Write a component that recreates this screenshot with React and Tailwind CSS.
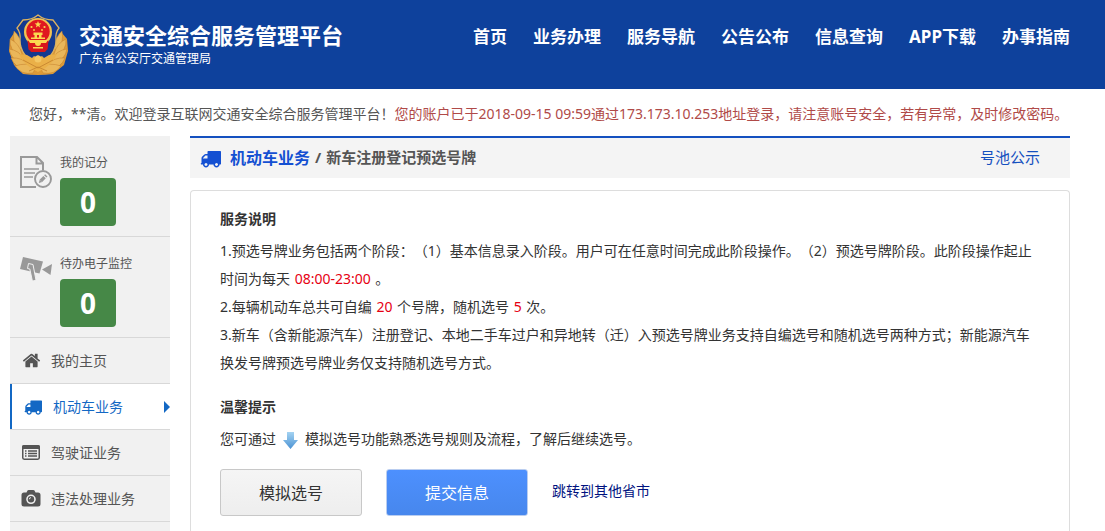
import React from 'react'

const navLinks = ['首页', '业务办理', '服务导航', '公告公布', '信息查询', 'APP下载', '办事指南']

const menuItems = [
    { label: '我的主页', icon: HomeIcon },
    { label: '机动车业务', icon: TruckIcon, active: true },
    { label: '驾驶证业务', icon: ListIcon },
    { label: '违法处理业务', icon: CameraIcon },
]

function HomeIcon() {
    return (
        <svg className="w-[19px] h-[19px]" viewBox="0 0 1792 1792" fill="currentColor" aria-hidden="true">
            <path d="M1472 992v480q0 26-19 45t-45 19h-384v-384h-256v384h-384q-26 0-45-19t-19-45v-480q0-1 .5-3t.5-3l575-474 575 474q1 2 1 6zm223-69l-62 74q-8 9-21 11h-3q-13 0-21-7l-692-577-692 577q-12 8-24 7-13-2-21-11l-62-74q-8-10-7-23.5t11-21.5l719-599q32-26 76-26t76 26l244 204v-195q0-14 9-23t23-9h192q14 0 23 9t9 23v408l219 182q10 8 11 21.5t-7 23.5z" />
        </svg>
    )
}

function TruckIcon({ className = 'w-[18px] h-[18px]' }) {
    return (
        <svg className={className} viewBox="0 0 1792 1792" fill="currentColor" aria-hidden="true">
            <path d="M640 1408q0-52-38-90t-90-38-90 38-38 90 38 90 90 38 90-38 38-90zm-384-512h384v-256h-158q-13 0-22 9l-195 195q-9 9-9 22v30zm1280 512q0-52-38-90t-90-38-90 38-38 90 38 90 90 38 90-38 38-90zm256-1088v1024q0 15-4 26.5t-13.5 18.5-16.5 11.5-23.5 6-22.5 2-25.5 0-22.5-.5q0 106-75 181t-181 75-181-75-75-181h-384q0 106-75 181t-181 75-181-75-75-181h-64q-3 0-22.5.5t-25.5 0-22.5-2-23.5-6-16.5-11.5-13.5-18.5-4-26.5q0-26 19-45t45-19v-320q0-8-.5-35t0-38 2.5-34.5 6.5-37 14-30.5 22.5-30l198-198q19-19 50.5-32t58.5-13h160v-192q0-26 19-45t45-19h1024q26 0 45 19t19 45z" />
        </svg>
    )
}

function ListIcon() {
    return (
        <svg className="w-[18px] h-[18px]" viewBox="0 0 18 18" aria-hidden="true">
            <rect x="0.75" y="1.75" width="16.5" height="13.5" rx="1.4" fill="none" stroke="currentColor" strokeWidth="1.5" />
            <path d="M0 5V3q0-2 2-2h14q2 0 2 2v2z" fill="currentColor" />
            <path d="M3 7h1.500M6 7h9M3 9.500h1.500M6 9.500h9M3 12h1.500M6 12h9" stroke="currentColor" strokeWidth="1.300" />
        </svg>
    )
}

function CameraIcon() {
    return (
        <svg className="w-[20px] h-[18px]" viewBox="0 0 19 18" aria-hidden="true">
            <path fill="currentColor" fillRule="evenodd" d="M2.500 2.500H5l1-2Q6.400 0 7.200 0h4.600q.8 0 1.200.5l1 2h2.500Q19 2.500 19 5v9q0 2.500-2.500 2.500h-14Q0 16.500 0 14V5q0-2.500 2.500-2.500zM9.500 4.500a4.800 4.800 0 1 0 0 9.600 4.800 4.800 0 0 0 0-9.600z" />
            <circle cx="9.500" cy="9.300" r="3.200" fill="currentColor" />
            <path d="M7.800 9.300q0-1.700 1.700-1.700" fill="none" stroke="#f1f1f1" strokeWidth="0.900" />
        </svg>
    )
}

function RecordIcon() {
    return (
        <svg className="w-8 h-8 shrink-0" viewBox="0 0 32 32" fill="none" stroke="#999" aria-hidden="true">
            <path d="M16 31H1V1h16l6 6v7M16.500 1v6.500H23" strokeWidth="2" />
            <path d="M4 13h15M4 17h11M4 21h9" strokeWidth="1.700" />
            <circle cx="23" cy="23" r="8" strokeWidth="1.900" />
            <path d="M18.800 27l1-3.500 2.400 2.400z" fill="#999" stroke="none" />
            <path d="M21 24.700l3.600-3.600M25.300 20.400l1-1" strokeWidth="3.400" />
        </svg>
    )
}

function MonitorIcon() {
    return (
        <svg className="w-8 h-8 shrink-0" viewBox="0 0 32 32" aria-hidden="true">
            <path d="M3 0l20 4.500-3.500 12L0 12z" fill="#999" />
            <path d="M8.500 6.500l4.500 1 3 15.800-3.600.8L9.800 12l-2.300-.5z" fill="#999" stroke="#f1f1f1" strokeWidth="1" />
            <path d="M22 12.500L32 7l-1.500 11z" fill="#999" />
        </svg>
    )
}

// Police badge: laurel wreath, shield and the red national emblem
function PoliceBadge() {
    return (
        <svg className="w-[60px] h-[62px] shrink-0" viewBox="0 0 60 62" aria-hidden="true">
            <path d="M5 19q5 5 8 14 4 14 16 21 12-7 16-21 3-9 8-14l5 6 1 12-4 14-11 9q-15 2-30 0L5 51 0 37l1-12z" fill="#dc9a38" />
            <g fill="#eab75a" stroke="#c27f2c" strokeWidth="0.500">
                <path d="M5 17q7 6 8 17l-4 3Q3 28 5 17z" />
                <path d="M1 25q9 4 12 15l-2 3Q0 36 1 25z" />
                <path d="M0 35q10 1 16 11l-3 3Q2 46 0 35z" />
                <path d="M2 44q11-1 18 7l-3 4Q6 54 2 44z" />
                <path d="M6 52q11-4 21 1l-3 6Q12 61 6 52z" />
                <path d="M53 17q-7 6-8 17l4 3q6-9 4-20z" />
                <path d="M57 25q-9 4-12 15l2 3q11-7 10-18z" />
                <path d="M58 35q-10 1-16 11l3 3q11-3 13-14z" />
                <path d="M56 44q-11-1-18 7l3 4q11-1 15-11z" />
                <path d="M52 52q-11-4-21 1l3 6q12 2 18-7z" />
            </g>
            <path d="M29 1q6 5 15 5l6 8q-4 5-3 12 0 16-18 25-18-9-18-25 1-7-3-12l6-8q9 0 15-5z" fill="#14398f" stroke="#dcb261" strokeWidth="1.300" />
            <path d="M10 40l8 1 5 3 2-2 2 1 2-2 2 2 2-1 2 2 5-3 8-1q-4 11-19 18-15-7-19-18z" fill="#eab048" />
            <path d="M14 46l15 8 15-8M20 57l9-4 9 4" fill="none" stroke="#c27f2c" strokeWidth="0.800" />
            <path d="M19 28h20l-1 7-2 3H22l-2-3z" fill="#d8171c" />
            <circle cx="29" cy="18" r="14" fill="#f1c352" />
            <circle cx="29" cy="17.500" r="11.700" fill="#e01820" />
            <path d="M18.500 26.500h21l-1 9-3 2-3-2h-7l-3 2-3-2z" fill="#d8171c" />
            <g fill="#fbd850">
                <path d="M29 7l.9 2.300 2.500.1-2 1.600.7 2.400-2.100-1.400-2.100 1.400.7-2.400-2-1.600 2.500-.1z" />
                <circle cx="22.500" cy="13" r="1.100" />
                <circle cx="35.500" cy="13" r="1.100" />
                <circle cx="25" cy="16" r="0.900" />
                <circle cx="33" cy="16" r="0.900" />
                <path d="M24.500 18.500h9v2.500h-1v2.500h3.500v1.500H22v-1.500h3.500V21h-1z" />
                <path d="M19 26h20l-2 3H21zM24 33h10v1.500H24z" />
                <circle cx="29" cy="29" r="3" />
            </g>
            <path d="M28 21h2v2.500h-2z" fill="#de1820" />
            <circle cx="29" cy="45" r="3.500" fill="#f3c765" />
        </svg>
    )
}

function DownArrow() {
    return (
        <svg className="inline-block w-[15px] h-[17px] mx-[7px] align-middle" viewBox="0 0 15 17" aria-hidden="true">
            <defs>
                <linearGradient id="arrow-fill" x1="0" y1="0" x2="0" y2="1">
                    <stop offset="0" stopColor="#a4d3f2" />
                    <stop offset="1" stopColor="#4b92d3" />
                </linearGradient>
            </defs>
            <path d="M4 0h7v8h4l-7.500 9L0 8h4z" fill="url(#arrow-fill)" />
        </svg>
    )
}

function StatCard({ icon, label, count }) {
    return (
        <div className="flex gap-2 h-[101px] pl-[10px] pt-5 border-b border-[#d8d8d8]">
            {icon}
            <div>
                <p className="pt-px text-xs leading-3 text-[#555]">{label}</p>
                <div className="mt-[9px] w-14 h-12 flex items-center justify-center rounded bg-[#468847] text-white text-[28px] font-bold">
                    {count}
                </div>
            </div>
        </div>
    )
}

function MenuItem({ item }) {
    const Icon = item.icon
    return (
        <li className="border-b border-[#d8d8d8]">
            <a
                href="#"
                className={
                    item.active
                        ? 'flex items-center gap-[10px] h-[45px] pl-[11px] border-l-2 border-[#1368c4] bg-white text-[#1368c4]'
                        : 'flex items-center gap-[10px] h-[45px] pl-[11px] text-[#555]'
                }
            >
                <span className="w-5 flex justify-center">
                    <Icon />
                </span>
                <span>{item.label}</span>
                {item.active && (
                    <svg className="ml-auto w-1.5 h-3" viewBox="0 0 6 12" fill="currentColor" aria-hidden="true">
                        <path d="M0 0l6 6-6 6z" />
                    </svg>
                )}
            </a>
        </li>
    )
}

function Highlight({ children }) {
    return <span className="mx-px text-[#e60012]">{children}</span>
}

export default function App() {
    return (
        <div className="min-h-screen flex flex-col bg-white text-sm text-[#333] font-['Noto_Sans','Noto_Sans_CJK_SC',sans-serif] [text-spacing-trim:space-all]">
            <header className="flex items-center justify-between h-[89px] pl-[9px] pr-[35px] bg-[#0e419c] text-white">
                <div className="flex items-center gap-[10px]">
                    <PoliceBadge />
                    <div>
                        <h1 className="text-[22px] leading-7 font-bold">交通安全综合服务管理平台</h1>
                        <p className="text-xs leading-5">广东省公安厅交通管理局</p>
                    </div>
                </div>
                <nav className="flex gap-[26px] pb-[14px] text-[17px] font-bold whitespace-nowrap">
                    {navLinks.map((link) => (
                        <a key={link} href="#">{link}</a>
                    ))}
                </nav>
            </header>

            <p className="pl-[29px] py-3 h-[47px] leading-[26px] text-[#555] whitespace-nowrap">
                您好，**清。欢迎登录互联网交通安全综合服务管理平台！
                <span className="text-[#b04a48]">
                    您的账户已于2018-09-15 09:59通过173.173.10.253地址登录，请注意账号安全，若有异常，及时修改密码。
                </span>
            </p>

            <div className="flex-1 flex gap-5 pl-[10px] pr-[35px]">
                <aside className="w-40 shrink-0 bg-[#f1f1f1]">
                    <StatCard icon={<RecordIcon />} label="我的记分" count={0} />
                    <StatCard icon={<MonitorIcon />} label="待办电子监控" count={0} />
                    <ul>
                        {menuItems.map((item) => (
                            <MenuItem key={item.label} item={item} />
                        ))}
                    </ul>
                </aside>

                <main className="flex-1 flex flex-col">
                    <div className="flex items-center h-[42px] pl-[10px] pr-[30px] border-t-2 border-[#1450bf] bg-[#f4f4f4] text-[15px]">
                        <TruckIcon className="w-[21px] h-[21px] mr-[9px] text-[#1450d2]" />
                        <h2 className="flex items-center gap-[5px] font-bold text-[#555]">
                            <a href="#" className="text-base text-[#1450d2]">机动车业务</a>
                            <span>/</span>
                            <span>新车注册登记预选号牌</span>
                        </h2>
                        <a href="#" className="ml-auto text-[#1450bf]">号池公示</a>
                    </div>

                    {/* Service notes and actions */}
                    <section className="flex-1 mt-3 px-[29px] pt-[14px] border border-b-0 border-[#ddd] rounded-t-sm leading-7">
                        <h3 className="mb-1 font-bold">服务说明</h3>
                        <p>1.预选号牌业务包括两个阶段：（1）基本信息录入阶段。用户可在任意时间完成此阶段操作。（2）预选号牌阶段。此阶段操作起止时间为每天 <Highlight>08:00-23:00</Highlight> 。</p>
                        <p>2.每辆机动车总共可自编 <Highlight>20</Highlight> 个号牌，随机选号 <Highlight>5</Highlight> 次。</p>
                        <p>3.新车（含新能源汽车）注册登记、本地二手车过户和异地转（迁）入预选号牌业务支持自编选号和随机选号两种方式；新能源汽车换发号牌预选号牌业务仅支持随机选号方式。</p>

                        <h3 className="mt-4 mb-1 font-bold">温馨提示</h3>
                        <p>您可通过<DownArrow />模拟选号功能熟悉选号规则及流程，了解后继续选号。</p>

                        <div className="flex items-center gap-6 mt-4">
                            <button type="button" className="w-[142px] h-[47px] border border-[#c8c8c8] rounded-[3px] bg-linear-to-b from-[#f5f5f5] to-[#eee] text-base">
                                模拟选号
                            </button>
                            <button type="button" className="w-[142px] h-[47px] border border-[#b9cdf0] rounded-[3px] bg-linear-to-b from-[#4d90fe] to-[#4787ed] text-base text-white">
                                提交信息
                            </button>
                            <a href="#" className="pb-1 text-[#00127f]">跳转到其他省市</a>
                        </div>
                    </section>
                </main>
            </div>
        </div>
    )
}
